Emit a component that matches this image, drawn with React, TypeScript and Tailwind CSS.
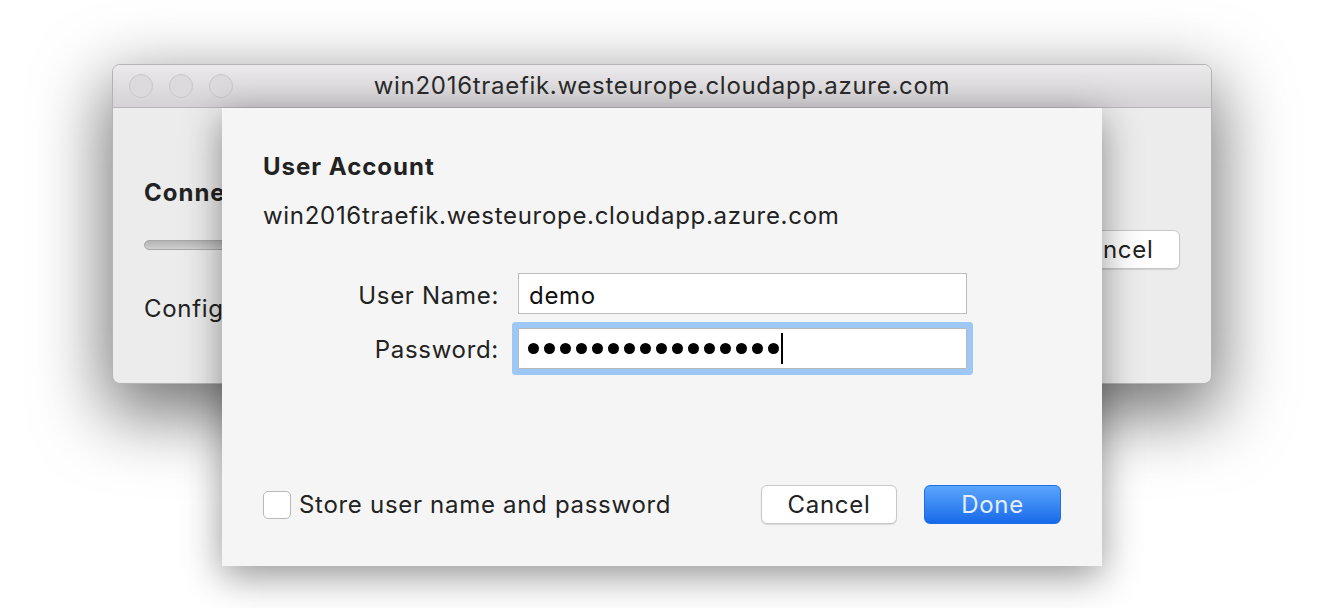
const font = "font-['Inter','Liberation_Sans',sans-serif]";

function TrafficLight() {
  return (
    <span className="h-[24px] w-[24px] rounded-full border border-[#c9c7c9] bg-[#dcdadc]" />
  );
}

function BackWindow() {
  return (
    <div className="absolute left-[112px] top-[64px] flex h-[320px] w-[1100px] flex-col overflow-hidden rounded-[8px] border border-[#b4b2b4] bg-[#ececec] shadow-[0_24px_70px_6px_rgba(0,0,0,0.55)]">
      <div className="relative flex h-[43px] shrink-0 items-center border-b border-[#b8b6b8] bg-gradient-to-b from-[#ebe9eb] to-[#d4d2d4] px-[16px]">
        <div className="flex gap-[16px]">
          <TrafficLight />
          <TrafficLight />
          <TrafficLight />
        </div>
        <div className="absolute inset-0 flex items-center justify-center text-[24px] tracking-[0.7px] text-[#2a2a2a]">
          win2016traefik.westeurope.cloudapp.azure.com
        </div>
      </div>
      <div className="flex flex-1 items-start justify-between px-[31px] pt-[70px]">
        {/* only the part left of the sheet is visible */}
        <div className="flex w-[79px] flex-col overflow-hidden whitespace-nowrap">
          <div className="text-[24px] font-bold leading-[30px] tracking-[1px] text-[#222]">Connecting...</div>
          <div className="mt-[32px] h-[10px] w-[800px] shrink-0 rounded-full border border-[#a8a8a8] bg-gradient-to-b from-[#b4b4b4] to-[#cfcfcf]" />
          <div className="mt-[44px] text-[24px] leading-[30px] tracking-[0.7px] text-[#222]">Configuring remote session...</div>
        </div>
        <button className="mt-[52px] h-[39px] w-[136px] rounded-[6px] border border-[#c8c8c8] bg-white text-[24px] tracking-[0.7px] text-[#222] shadow-[0_1px_1px_rgba(0,0,0,0.12)]">
          Cancel
        </button>
      </div>
    </div>
  );
}

function Sheet() {
  return (
    <div className="absolute left-[222px] top-[108px] flex h-[458px] w-[880px] flex-col bg-[#f5f5f5] px-[41px] shadow-[0_10px_36px_rgba(0,0,0,0.42)]">
      <div className="mt-[44px] text-[24px] font-bold leading-[30px] tracking-[1px] text-[#222]">User Account</div>
      <div className="mt-[19px] text-[24px] leading-[30px] tracking-[0.7px] text-[#222]">
        win2016traefik.westeurope.cloudapp.azure.com
      </div>
      <div className="mt-[42px] grid grid-cols-[236px_449px] items-center gap-x-[19px] gap-y-[14px] text-[24px] leading-[30px] tracking-[0.7px]">
        <div className="pt-[4px] text-right text-[#222]">User Name:</div>
        <div className="flex h-[41px] items-center border border-[#bdbdbd] bg-white pl-[10px] pt-[4px] text-[#111]">
          demo
        </div>
        <div className="pt-[2px] text-right text-[#222]">Password:</div>
        <div className="flex h-[41px] items-center rounded-[1px] border border-[#b8b8b8] bg-white pl-[9px] shadow-[0_0_0_6px_#9dc7f4]">
          <div className="flex gap-[5px]">
            {Array.from({ length: 16 }).map((_, i) => (
              <span key={i} className="h-[11px] w-[11px] rounded-full bg-black" />
            ))}
          </div>
          <span className="ml-[2px] h-[31px] w-[2px] bg-black" />
        </div>
      </div>
      <div className="mt-auto mb-[42px] flex items-center">
        <span className="h-[28px] w-[28px] rounded-[5px] border border-[#b8b8b8] bg-white" />
        <span className="ml-[8px] text-[24px] tracking-[0.7px] text-[#222]">Store user name and password</span>
        <button className="ml-auto h-[39px] w-[136px] rounded-[6px] border border-[#c8c8c8] bg-white text-[24px] tracking-[0.7px] text-[#222] shadow-[0_1px_1px_rgba(0,0,0,0.12)]">
          Cancel
        </button>
        <button className="ml-[27px] h-[39px] w-[137px] rounded-[6px] border border-[#1d6ee8] bg-gradient-to-b from-[#5ba5fb] to-[#1769ea] text-[24px] tracking-[0.7px] text-[#e3eeff]">
          Done
        </button>
      </div>
    </div>
  );
}

export default function App() {
  return (
    <div className={`relative h-[608px] w-[1324px] overflow-hidden bg-white ${font}`}>
      <BackWindow />
      <Sheet />
    </div>
  );
}
